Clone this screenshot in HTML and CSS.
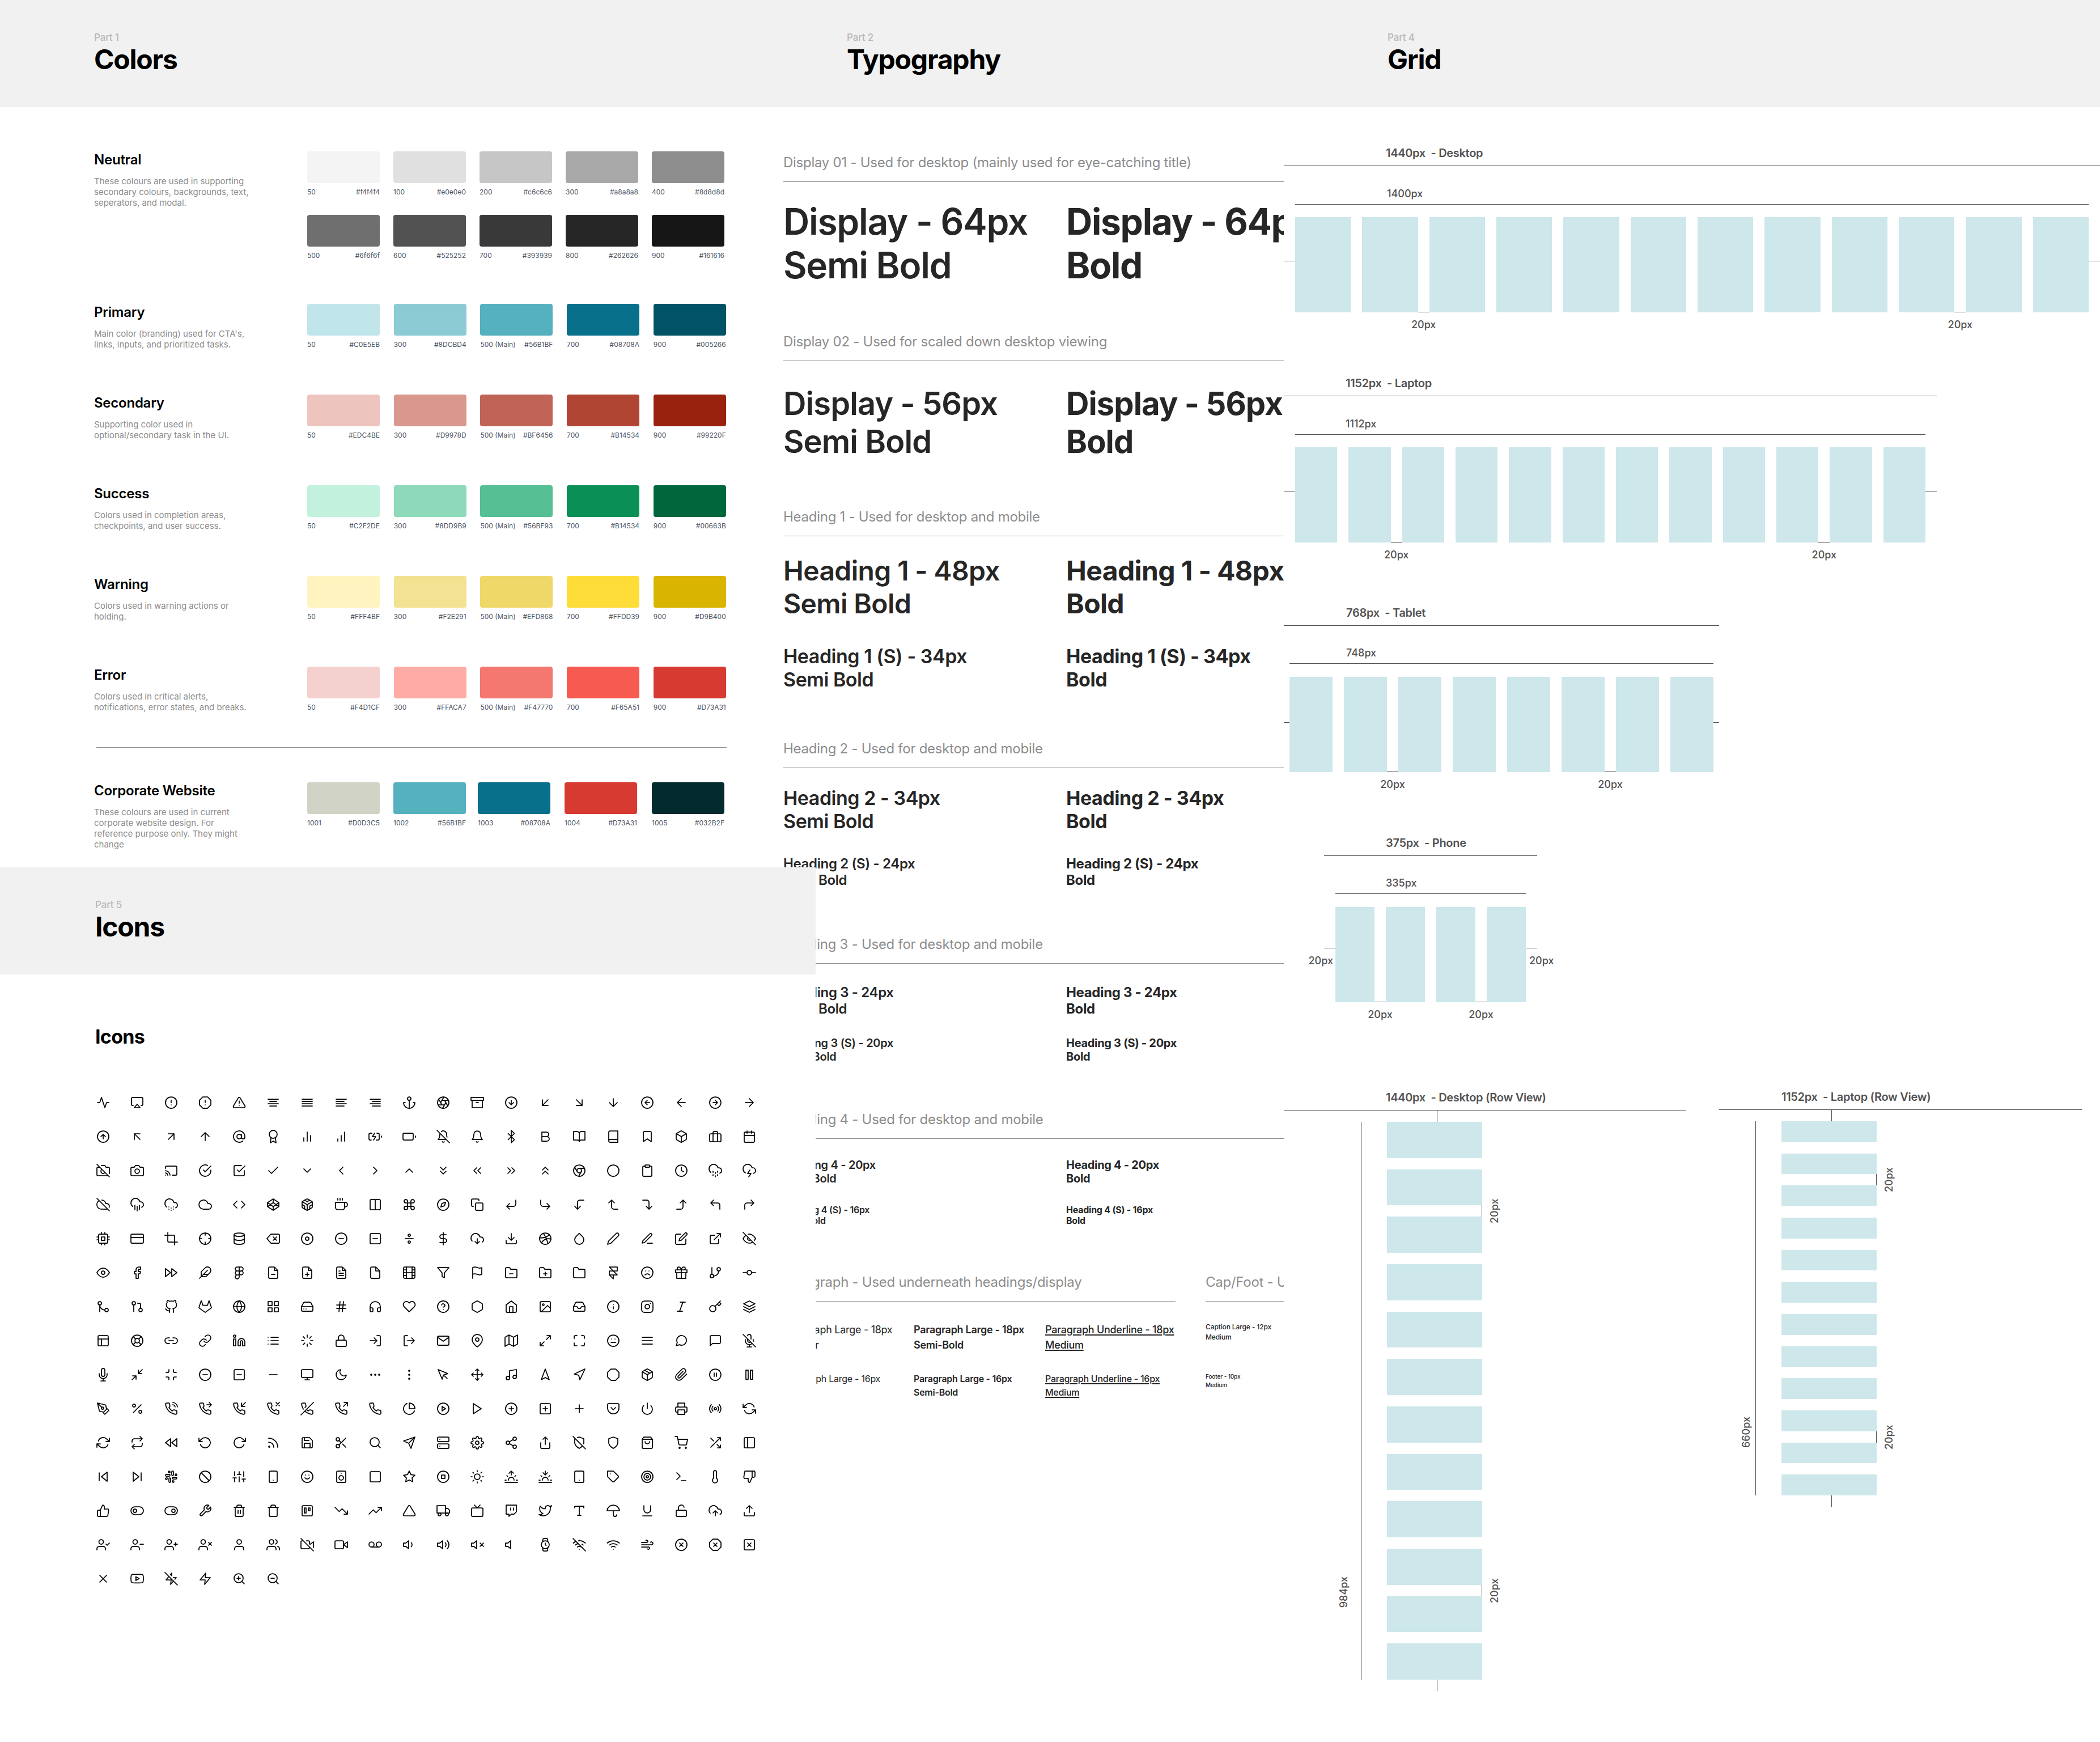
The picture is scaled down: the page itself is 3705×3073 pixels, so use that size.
FILE: index.html
```html
<!DOCTYPE html>
<html lang="en">
<head>
<meta charset="utf-8">
<title>Design system</title>
<link rel="stylesheet" href="styles.css">
</head>
<body>
<header class="band">
  <div class="head h1st"><div class="part">Part 1</div><h1>Colors</h1></div>
  <div class="head"><div class="part">Part 2</div><h1>Typography</h1></div>
  <div class="head"><div class="part">Part 4</div><h1>Grid</h1></div>
</header>
<main class="board">
<div class="left">
<section class="colors">
  <div class="crow neutral">
    <div><h3>Neutral</h3><p>These colours are used in supporting secondary colours, backgrounds, text, seperators, and modal.</p></div>
    <div class="swatches">
      <div class="sw"><div class="chip n1"></div><div class="lab"><span>50</span><span>#f4f4f4</span></div></div>
      <div class="sw"><div class="chip n2"></div><div class="lab"><span>100</span><span>#e0e0e0</span></div></div>
      <div class="sw"><div class="chip n3"></div><div class="lab"><span>200</span><span>#c6c6c6</span></div></div>
      <div class="sw"><div class="chip n4"></div><div class="lab"><span>300</span><span>#a8a8a8</span></div></div>
      <div class="sw"><div class="chip n5"></div><div class="lab"><span>400</span><span>#8d8d8d</span></div></div>
      <div class="sw"><div class="chip n6"></div><div class="lab"><span>500</span><span>#6f6f6f</span></div></div>
      <div class="sw"><div class="chip n7"></div><div class="lab"><span>600</span><span>#525252</span></div></div>
      <div class="sw"><div class="chip n8"></div><div class="lab"><span>700</span><span>#393939</span></div></div>
      <div class="sw"><div class="chip n9"></div><div class="lab"><span>800</span><span>#262626</span></div></div>
      <div class="sw"><div class="chip n10"></div><div class="lab"><span>900</span><span>#161616</span></div></div>
    </div>
  </div>
  <div class="crow">
    <div><h3>Primary</h3><p>Main color (branding) used for CTA's, links, inputs, and prioritized tasks.</p></div>
    <div class="swatches wide">
      <div class="sw"><div class="chip p1"></div><div class="lab"><span>50</span><span>#C0E5EB</span></div></div>
      <div class="sw"><div class="chip p2"></div><div class="lab"><span>300</span><span>#8DCBD4</span></div></div>
      <div class="sw"><div class="chip p3"></div><div class="lab"><span>500 (Main)</span><span>#56B1BF</span></div></div>
      <div class="sw"><div class="chip p4"></div><div class="lab"><span>700</span><span>#08708A</span></div></div>
      <div class="sw"><div class="chip p5"></div><div class="lab"><span>900</span><span>#005266</span></div></div>
    </div>
  </div>
  <div class="crow">
    <div><h3>Secondary</h3><p>Supporting color used in optional/secondary task in the UI.</p></div>
    <div class="swatches wide">
      <div class="sw"><div class="chip s1"></div><div class="lab"><span>50</span><span>#EDC4BE</span></div></div>
      <div class="sw"><div class="chip s2"></div><div class="lab"><span>300</span><span>#D9978D</span></div></div>
      <div class="sw"><div class="chip s3"></div><div class="lab"><span>500 (Main)</span><span>#BF6456</span></div></div>
      <div class="sw"><div class="chip s4"></div><div class="lab"><span>700</span><span>#B14534</span></div></div>
      <div class="sw"><div class="chip s5"></div><div class="lab"><span>900</span><span>#99220F</span></div></div>
    </div>
  </div>
  <div class="crow">
    <div><h3>Success</h3><p>Colors used in completion areas, checkpoints, and user success.</p></div>
    <div class="swatches wide">
      <div class="sw"><div class="chip g1"></div><div class="lab"><span>50</span><span>#C2F2DE</span></div></div>
      <div class="sw"><div class="chip g2"></div><div class="lab"><span>300</span><span>#8DD9B9</span></div></div>
      <div class="sw"><div class="chip g3"></div><div class="lab"><span>500 (Main)</span><span>#56BF93</span></div></div>
      <div class="sw"><div class="chip g4"></div><div class="lab"><span>700</span><span>#B14534</span></div></div>
      <div class="sw"><div class="chip g5"></div><div class="lab"><span>900</span><span>#00663B</span></div></div>
    </div>
  </div>
  <div class="crow">
    <div><h3>Warning</h3><p>Colors used in warning actions or holding.</p></div>
    <div class="swatches wide">
      <div class="sw"><div class="chip y1"></div><div class="lab"><span>50</span><span>#FFF4BF</span></div></div>
      <div class="sw"><div class="chip y2"></div><div class="lab"><span>300</span><span>#F2E291</span></div></div>
      <div class="sw"><div class="chip y3"></div><div class="lab"><span>500 (Main)</span><span>#EFD868</span></div></div>
      <div class="sw"><div class="chip y4"></div><div class="lab"><span>700</span><span>#FFDD39</span></div></div>
      <div class="sw"><div class="chip y5"></div><div class="lab"><span>900</span><span>#D9B400</span></div></div>
    </div>
  </div>
  <div class="crow last">
    <div><h3>Error</h3><p>Colors used in critical alerts, notifications, error states, and breaks.</p></div>
    <div class="swatches wide">
      <div class="sw"><div class="chip e1"></div><div class="lab"><span>50</span><span>#F4D1CF</span></div></div>
      <div class="sw"><div class="chip e2"></div><div class="lab"><span>300</span><span>#FFACA7</span></div></div>
      <div class="sw"><div class="chip e3"></div><div class="lab"><span>500 (Main)</span><span>#F47770</span></div></div>
      <div class="sw"><div class="chip e4"></div><div class="lab"><span>700</span><span>#F65A51</span></div></div>
      <div class="sw"><div class="chip e5"></div><div class="lab"><span>900</span><span>#D73A31</span></div></div>
    </div>
  </div>
  <hr class="rule">
  <div class="crow corp">
    <div><h3>Corporate Website</h3><p>These colours are used in current corporate website design. For reference purpose only. They might change</p></div>
    <div class="swatches">
      <div class="sw"><div class="chip k1"></div><div class="lab"><span>1001</span><span>#D0D3C5</span></div></div>
      <div class="sw"><div class="chip p3"></div><div class="lab"><span>1002</span><span>#56B1BF</span></div></div>
      <div class="sw"><div class="chip p4"></div><div class="lab"><span>1003</span><span>#08708A</span></div></div>
      <div class="sw"><div class="chip e5"></div><div class="lab"><span>1004</span><span>#D73A31</span></div></div>
      <div class="sw"><div class="chip k5"></div><div class="lab"><span>1005</span><span>#032B2F</span></div></div>
    </div>
  </div>
</section>
<section class="icons-part">
  <div class="band icons-band"><div class="head"><div class="part">Part 5</div><h1>Icons</h1></div></div>
  <div class="icons-body">
    <h2>Icons</h2>
    <svg class="defs"><defs>
      <circle id="c" cx="12" cy="12" r="10"/>
      <rect id="s" x="3" y="3" width="18" height="18" rx="2"/>
      <path id="b" d="M21 16V8a2 2 0 0 0-1-1.73l-7-4a2 2 0 0 0-2 0l-7 4A2 2 0 0 0 3 8v8a2 2 0 0 0 1 1.73l7 4a2 2 0 0 0 2 0l7-4A2 2 0 0 0 21 16z"/>
      <path id="p" d="M22 16.92v3a2 2 0 0 1-2.18 2 19.79 19.79 0 0 1-8.63-3.07 19.5 19.5 0 0 1-6-6 19.79 19.79 0 0 1-3.07-8.67A2 2 0 0 1 4.11 2h3a2 2 0 0 1 2 1.72 12.84 12.84 0 0 0 .7 2.81 2 2 0 0 1-.45 2.11L8.09 9.91a16 16 0 0 0 6 6l1.27-1.27a2 2 0 0 1 2.11-.45 12.84 12.84 0 0 0 2.81.7A2 2 0 0 1 22 16.92z"/>
      <path id="f" d="M14 2H6a2 2 0 0 0-2 2v16a2 2 0 0 0 2 2h12a2 2 0 0 0 2-2V8zM14 2v6h6"/>
      <path id="o" d="M7.86 2h8.28L22 7.86v8.28L16.14 22H7.86L2 16.14V7.86z"/>
      <path id="t" d="M10.29 3.86L1.82 18a2 2 0 0 0 1.71 3h16.94a2 2 0 0 0 1.71-3L13.71 3.86a2 2 0 0 0-3.42 0z"/>
      <path id="h" d="M5.45 5.11L2 12v6a2 2 0 0 0 2 2h16a2 2 0 0 0 2-2v-6l-3.45-6.89A2 2 0 0 0 16.76 4H7.24a2 2 0 0 0-1.79 1.11z"/>
      <path id="u" d="M16 21v-2a4 4 0 0 0-4-4H5a4 4 0 0 0-4 4v2M12.5 7a4 4 0 1 1-8 0 4 4 0 0 1 8 0z"/>
      <path id="v" d="M11 5L6 9H2v6h4l5 4z"/>
      <path id="sr" d="M17 18a5 5 0 0 0-10 0M4.22 10.22l1.42 1.42M1 18h2M21 18h2M18.36 11.64l1.42-1.42M23 22H1"/>
      <path id="fd" d="M22 19a2 2 0 0 1-2 2H4a2 2 0 0 1-2-2V5a2 2 0 0 1 2-2h5l2 3h9a2 2 0 0 1 2 2z"/>
    </defs></svg>
    <div class="icon-grid">
<svg><path d="M22 12h-4l-3 9L9 3l-3 9H2"/></svg>
<svg><path d="M5 17H4a2 2 0 0 1-2-2V5a2 2 0 0 1 2-2h16a2 2 0 0 1 2 2v10a2 2 0 0 1-2 2h-1M12 15l5 6H7z"/></svg>
<svg><use href="#c"/><path d="M12 8v4M12 16h.01"/></svg>
<svg><use href="#o"/><path d="M12 8v4M12 16h.01"/></svg>
<svg><use href="#t"/><path d="M12 9v4M12 17h.01"/></svg>
<svg><path d="M18 10H6M21 6H3M21 14H3M18 18H6"/></svg>
<svg><path d="M21 10H3M21 6H3M21 14H3M21 18H3"/></svg>
<svg><path d="M17 10H3M21 6H3M21 14H3M17 18H3"/></svg>
<svg><path d="M21 10H7M21 6H3M21 14H3M21 18H7"/></svg>
<svg><circle cx="12" cy="5" r="3"/><path d="M12 22V8M5 12H2a10 10 0 0 0 20 0h-3"/></svg>
<svg><use href="#c"/><path d="M14.31 8l5.74 9.94M9.69 8h11.48M7.38 12l5.74-9.94M9.69 16L3.95 6.06M14.31 16H2.83M16.62 12l-5.74 9.94"/></svg>
<svg><path d="M21 8v13H3V8M1 3h22v5H1zM10 12h4"/></svg>
<svg><use href="#c"/><path d="M8 12l4 4 4-4M12 8v8"/></svg>
<svg><path d="M17 7L7 17M17 17H7V7"/></svg>
<svg><path d="M7 7l10 10M17 7v10H7"/></svg>
<svg><path d="M12 5v14M19 12l-7 7-7-7"/></svg>
<svg><use href="#c"/><path d="M12 8l-4 4 4 4M16 12H8"/></svg>
<svg><path d="M19 12H5M12 19l-7-7 7-7"/></svg>
<svg><use href="#c"/><path d="M12 16l4-4-4-4M8 12h8"/></svg>
<svg><path d="M5 12h14M12 5l7 7-7 7"/></svg>

<svg><use href="#c"/><path d="M16 12l-4-4-4 4M12 16V8"/></svg>
<svg><path d="M17 17L7 7M7 17V7h10"/></svg>
<svg><path d="M7 17L17 7M7 7h10v10"/></svg>
<svg><path d="M12 19V5M5 12l7-7 7 7"/></svg>
<svg><circle cx="12" cy="12" r="4"/><path d="M16 8v5a3 3 0 0 0 6 0v-1a10 10 0 1 0-3.92 7.94"/></svg>
<svg><circle cx="12" cy="8" r="7"/><path d="M8.21 13.89L7 23l5-3 5 3-1.21-9.12"/></svg>
<svg><path d="M18 20V10M12 20V4M6 20v-6"/></svg>
<svg><path d="M12 20V10M18 20V4M6 20v-4"/></svg>
<svg><path d="M5 18H3a2 2 0 0 1-2-2V8a2 2 0 0 1 2-2h3.19M15 6h2a2 2 0 0 1 2 2v8a2 2 0 0 1-2 2h-3.19M23 13v-2M11 6l-4 6h6l-4 6"/></svg>
<svg><rect x="1" y="6" width="18" height="12" rx="2"/><path d="M23 13v-2"/></svg>
<svg><path d="M13.73 21a2 2 0 0 1-3.46 0M18.63 13A17.89 17.89 0 0 1 18 8M6.26 6.26A5.86 5.86 0 0 0 6 8c0 7-3 9-3 9h14M18 8a6 6 0 0 0-9.33-5M1 1l22 22"/></svg>
<svg><path d="M18 8A6 6 0 0 0 6 8c0 7-3 9-3 9h18s-3-2-3-9M13.73 21a2 2 0 0 1-3.46 0"/></svg>
<svg><path d="M6.5 6.5l11 11L12 23V1l5.500 5.500-11 11"/></svg>
<svg><path d="M6 4h8a4 4 0 0 1 4 4 4 4 0 0 1-4 4H6zM6 12h9a4 4 0 0 1 4 4 4 4 0 0 1-4 4H6z"/></svg>
<svg><path d="M2 3h6a4 4 0 0 1 4 4v14a3 3 0 0 0-3-3H2zM22 3h-6a4 4 0 0 0-4 4v14a3 3 0 0 1 3-3h7z"/></svg>
<svg><path d="M4 19.5A2.5 2.5 0 0 1 6.500 17H20M6.500 2H20v20H6.500A2.500 2.500 0 0 1 4 19.500v-15A2.500 2.500 0 0 1 6.500 2z"/></svg>
<svg><path d="M19 21l-7-5-7 5V5a2 2 0 0 1 2-2h10a2 2 0 0 1 2 2z"/></svg>
<svg><use href="#b"/><path d="M3.27 6.96L12 12.010l8.730-5.050M12 22.080V12"/></svg>
<svg><rect x="2" y="7" width="20" height="14" rx="2"/><path d="M16 21V5a2 2 0 0 0-2-2h-4a2 2 0 0 0-2 2v16"/></svg>
<svg><rect x="3" y="4" width="18" height="18" rx="2"/><path d="M16 2v4M8 2v4M3 10h18"/></svg>

<svg><path d="M1 1l22 22M21 21H3a2 2 0 0 1-2-2V8a2 2 0 0 1 2-2h3m3-3h6l2 3h4a2 2 0 0 1 2 2v9.340m-7.720-2.060a4 4 0 1 1-5.560-5.560"/></svg>
<svg><path d="M23 19a2 2 0 0 1-2 2H3a2 2 0 0 1-2-2V8a2 2 0 0 1 2-2h4l2-3h6l2 3h4a2 2 0 0 1 2 2z"/><circle cx="12" cy="13" r="4"/></svg>
<svg><path d="M2 16.100A5 5 0 0 1 5.900 20M2 12.050A9 9 0 0 1 9.950 20M2 8V6a2 2 0 0 1 2-2h16a2 2 0 0 1 2 2v12a2 2 0 0 1-2 2h-6M2 20h.01"/></svg>
<svg><path d="M22 11.080V12a10 10 0 1 1-5.930-9.140M22 4L12 14.010l-3-3"/></svg>
<svg><path d="M9 11l3 3L22 4M21 12v7a2 2 0 0 1-2 2H5a2 2 0 0 1-2-2V5a2 2 0 0 1 2-2h11"/></svg>
<svg><path d="M20 6L9 17l-5-5"/></svg>
<svg><path d="M6 9l6 6 6-6"/></svg>
<svg><path d="M15 18l-6-6 6-6"/></svg>
<svg><path d="M9 18l6-6-6-6"/></svg>
<svg><path d="M18 15l-6-6-6 6"/></svg>
<svg><path d="M7 13l5 5 5-5M7 6l5 5 5-5"/></svg>
<svg><path d="M11 17l-5-5 5-5M18 17l-5-5 5-5"/></svg>
<svg><path d="M13 17l5-5-5-5M6 17l5-5-5-5"/></svg>
<svg><path d="M17 11l-5-5-5 5M17 18l-5-5-5 5"/></svg>
<svg><use href="#c"/><circle cx="12" cy="12" r="4"/><path d="M21.170 8H12M3.950 6.060L8.540 14M10.880 21.940L15.460 14"/></svg>
<svg><use href="#c"/></svg>
<svg><path d="M16 4h2a2 2 0 0 1 2 2v14a2 2 0 0 1-2 2H6a2 2 0 0 1-2-2V6a2 2 0 0 1 2-2h2"/><rect x="8" y="2" width="8" height="4" rx="1"/></svg>
<svg><use href="#c"/><path d="M12 6v6l4 2"/></svg>
<svg><path d="M8 19v2M8 13v2M16 19v2M16 13v2M12 21v2M12 15v2M20 16.580A5 5 0 0 0 18 7h-1.260A8 8 0 1 0 4 15.250"/></svg>
<svg><path d="M19 16.900A5 5 0 0 0 18 7h-1.260a8 8 0 1 0-11.620 9M13 11l-4 6h6l-4 6"/></svg>

<svg><path d="M22.610 16.950A5 5 0 0 0 18 10h-1.260a8 8 0 0 0-7.050-6M5 5a8 8 0 0 0 4 15h9a5 5 0 0 0 1.700-.3M1 1l22 22"/></svg>
<svg><path d="M16 13v8M8 13v8M12 15v8M20 16.580A5 5 0 0 0 18 7h-1.260A8 8 0 1 0 4 15.250"/></svg>
<svg><path d="M20 17.580A5 5 0 0 0 18 8h-1.260A8 8 0 1 0 4 16.250M8 16h.01M8 20h.01M12 18h.01M12 22h.01M16 16h.01M16 20h.01"/></svg>
<svg><path d="M18 10h-1.260A8 8 0 1 0 9 20h9a5 5 0 0 0 0-10z"/></svg>
<svg><path d="M16 18l6-6-6-6M8 6l-6 6 6 6"/></svg>
<svg><path d="M12 2l10 6.500v7L12 22 2 15.500v-7zM12 22v-6.500M22 8.500l-10 7-10-7M2 15.500l10-7 10 7M12 2v6.500"/></svg>
<svg><use href="#b"/><path d="M7.500 4.210l4.500 2.600 4.500-2.600M7.500 19.790V14.600L3 12M21 12l-4.500 2.600v5.190M3.270 6.960L12 12.010l8.730-5.050M12 22.080V12"/></svg>
<svg><path d="M18 8h1a4 4 0 0 1 0 8h-1M2 8h16v9a4 4 0 0 1-4 4H6a4 4 0 0 1-4-4V8zM6 1v3M10 1v3M14 1v3"/></svg>
<svg><path d="M12 3h7a2 2 0 0 1 2 2v14a2 2 0 0 1-2 2h-7m0-18H5a2 2 0 0 0-2 2v14a2 2 0 0 0 2 2h7m0-18v18"/></svg>
<svg><path d="M18 3a3 3 0 0 0-3 3v12a3 3 0 0 0 3 3 3 3 0 0 0 3-3 3 3 0 0 0-3-3H6a3 3 0 0 0-3 3 3 3 0 0 0 3 3 3 3 0 0 0 3-3V6a3 3 0 0 0-3-3 3 3 0 0 0-3 3 3 3 0 0 0 3 3h12a3 3 0 0 0 3-3 3 3 0 0 0-3-3z"/></svg>
<svg><use href="#c"/><path d="M16.240 7.760l-2.120 6.360-6.360 2.120 2.120-6.360z"/></svg>
<svg><rect x="9" y="9" width="13" height="13" rx="2"/><path d="M5 15H4a2 2 0 0 1-2-2V4a2 2 0 0 1 2-2h9a2 2 0 0 1 2 2v1"/></svg>
<svg><path d="M9 10l-5 5 5 5M20 4v7a4 4 0 0 1-4 4H4"/></svg>
<svg><path d="M15 10l5 5-5 5M4 4v7a4 4 0 0 0 4 4h12"/></svg>
<svg><path d="M14 15l-5 5-5-5M20 4h-7a4 4 0 0 0-4 4v12"/></svg>
<svg><path d="M14 9L9 4 4 9M20 20h-7a4 4 0 0 1-4-4V4"/></svg>
<svg><path d="M10 15l5 5 5-5M4 4h7a4 4 0 0 1 4 4v12"/></svg>
<svg><path d="M10 9l5-5 5 5M4 20h7a4 4 0 0 0 4-4V4"/></svg>
<svg><path d="M9 14L4 9l5-5M20 20v-7a4 4 0 0 0-4-4H4"/></svg>
<svg><path d="M15 14l5-5-5-5M4 20v-7a4 4 0 0 1 4-4h12"/></svg>

<svg><rect x="4" y="4" width="16" height="16" rx="2"/><path d="M9 9h6v6H9zM9 1v3M15 1v3M9 20v3M15 20v3M20 9h3M20 14h3M1 9h3M1 14h3"/></svg>
<svg><rect x="1" y="4" width="22" height="16" rx="2"/><path d="M1 10h22"/></svg>
<svg><path d="M6.130 1L6 16a2 2 0 0 0 2 2h15M1 6.130L16 6a2 2 0 0 1 2 2v15"/></svg>
<svg><use href="#c"/><path d="M22 12h-4M6 12H2M12 6V2M12 22v-4"/></svg>
<svg><ellipse cx="12" cy="5" rx="9" ry="3"/><path d="M21 12c0 1.660-4 3-9 3s-9-1.340-9-3M3 5v14c0 1.660 4 3 9 3s9-1.340 9-3V5"/></svg>
<svg><path d="M21 4H8l-7 8 7 8h13a2 2 0 0 0 2-2V6a2 2 0 0 0-2-2zM18 9l-6 6M12 9l6 6"/></svg>
<svg><use href="#c"/><circle cx="12" cy="12" r="3"/></svg>
<svg><use href="#c"/><path d="M8 12h8"/></svg>
<svg><use href="#s"/><path d="M8 12h8"/></svg>
<svg><circle cx="12" cy="6" r="2"/><path d="M5 12h14"/><circle cx="12" cy="18" r="2"/></svg>
<svg><path d="M12 1v22M17 5H9.500a3.500 3.500 0 0 0 0 7h5a3.500 3.500 0 0 1 0 7H6"/></svg>
<svg><path d="M8 17l4 4 4-4M12 12v9M20.880 18.090A5 5 0 0 0 18 9h-1.260A8 8 0 1 0 3 16.290"/></svg>
<svg><path d="M21 15v4a2 2 0 0 1-2 2H5a2 2 0 0 1-2-2v-4M7 10l5 5 5-5M12 15V3"/></svg>
<svg><use href="#c"/><path d="M8.560 2.750c4.370 6.030 6.020 9.420 8.030 17.720m2.540-15.380c-3.720 4.350-8.940 5.660-16.880 5.850m19.500 1.900c-3.500-.93-6.630-.82-8.940 0-2.580.92-5.010 2.860-7.440 6.320"/></svg>
<svg><path d="M12 2.690l5.660 5.660a8 8 0 1 1-11.310 0z"/></svg>
<svg><path d="M17 3a2.828 2.828 0 1 1 4 4L7.500 20.500 2 22l1.500-5.500L17 3z"/></svg>
<svg><path d="M12 20h9M16.500 3.500a2.121 2.121 0 0 1 3 3L7 19l-4 1 1-4L16.500 3.500z"/></svg>
<svg><path d="M11 4H4a2 2 0 0 0-2 2v14a2 2 0 0 0 2 2h14a2 2 0 0 0 2-2v-7M18.500 2.500a2.121 2.121 0 0 1 3 3L12 15l-4 1 1-4 9.500-9.500z"/></svg>
<svg><path d="M18 13v6a2 2 0 0 1-2 2H5a2 2 0 0 1-2-2V8a2 2 0 0 1 2-2h6M15 3h6v6M10 14L21 3"/></svg>
<svg><path d="M17.940 17.940A10.070 10.070 0 0 1 12 20c-7 0-11-8-11-8a18.450 18.450 0 0 1 5.060-5.940M9.900 4.240A9.120 9.120 0 0 1 12 4c7 0 11 8 11 8a18.500 18.500 0 0 1-2.160 3.190m-6.720-1.070a3 3 0 1 1-4.240-4.240M1 1l22 22"/></svg>

<svg><path d="M1 12s4-8 11-8 11 8 11 8-4 8-11 8-11-8-11-8z"/><circle cx="12" cy="12" r="3"/></svg>
<svg><path d="M18 2h-3a5 5 0 0 0-5 5v3H7v4h3v8h4v-8h3l1-4h-4V7a1 1 0 0 1 1-1h3z"/></svg>
<svg><path d="M13 19l9-7-9-7zM2 19l9-7-9-7z"/></svg>
<svg><path d="M20.240 12.240a6 6 0 0 0-8.490-8.490L5 10.500V19h8.500zM16 8L2 22M17.500 15H9"/></svg>
<svg><path d="M5 5.500A3.500 3.500 0 0 1 8.500 2H12v7H8.500A3.500 3.500 0 0 1 5 5.500zM12 2h3.500a3.500 3.500 0 1 1 0 7H12V2zM12 12.500a3.500 3.500 0 1 1 7 0 3.500 3.500 0 1 1-7 0zM5 19.500A3.500 3.500 0 0 1 8.500 16H12v3.500a3.500 3.500 0 1 1-7 0zM5 12.500A3.500 3.500 0 0 1 8.500 9H12v7H8.500A3.500 3.500 0 0 1 5 12.500z"/></svg>
<svg><use href="#f"/><path d="M9 15h6"/></svg>
<svg><use href="#f"/><path d="M12 18v-6M9 15h6"/></svg>
<svg><use href="#f"/><path d="M16 13H8M16 17H8M10 9H8"/></svg>
<svg><path d="M13 2H6a2 2 0 0 0-2 2v16a2 2 0 0 0 2 2h12a2 2 0 0 0 2-2V9zM13 2v7h7"/></svg>
<svg><rect x="2" y="2" width="20" height="20" rx="2.180"/><path d="M7 2v20M17 2v20M2 12h20M2 7h5M2 17h5M17 17h5M17 7h5"/></svg>
<svg><path d="M22 3H2l8 9.460V19l4 2v-8.540z"/></svg>
<svg><path d="M4 15s1-1 4-1 5 2 8 2 4-1 4-1V3s-1 1-4 1-5-2-8-2-4 1-4 1zM4 22v-7"/></svg>
<svg><use href="#fd"/><path d="M9 14h6"/></svg>
<svg><use href="#fd"/><path d="M12 11v6M9 14h6"/></svg>
<svg><use href="#fd"/></svg>
<svg><path d="M5 16V9h14V2H5l14 14h-7m-7 0l7 7v-7m-7 0h7"/></svg>
<svg><use href="#c"/><path d="M16 16s-1.500-2-4-2-4 2-4 2M9 9h.01M15 9h.01"/></svg>
<svg><path d="M20 12v10H4V12M2 7h20v5H2zM12 22V7M12 7H7.500a2.500 2.500 0 0 1 0-5C11 2 12 7 12 7zM12 7h4.500a2.500 2.500 0 0 0 0-5C13 2 12 7 12 7z"/></svg>
<svg><path d="M6 3v12"/><circle cx="18" cy="6" r="3"/><circle cx="6" cy="18" r="3"/><path d="M18 9a9 9 0 0 1-9 9"/></svg>
<svg><circle cx="12" cy="12" r="4"/><path d="M1.050 12H7M17.010 12h5.950"/></svg>

<svg><circle cx="18" cy="18" r="3"/><circle cx="6" cy="6" r="3"/><path d="M6 21V9a9 9 0 0 0 9 9"/></svg>
<svg><circle cx="18" cy="18" r="3"/><circle cx="6" cy="6" r="3"/><path d="M13 6h3a2 2 0 0 1 2 2v7M6 9v12"/></svg>
<svg><path d="M9 19c-5 1.500-5-2.500-7-3m14 6v-3.870a3.370 3.370 0 0 0-.94-2.610c3.140-.35 6.440-1.540 6.440-7A5.440 5.440 0 0 0 20 4.770 5.070 5.070 0 0 0 19.910 1S18.730.65 16 2.480a13.380 13.380 0 0 0-7 0C6.270.65 5.090 1 5.090 1A5.070 5.070 0 0 0 5 4.770a5.440 5.440 0 0 0-1.500 3.780c0 5.420 3.300 6.610 6.440 7A3.370 3.370 0 0 0 9 18.130V22"/></svg>
<svg><path d="M22.650 14.390L12 22.130 1.350 14.390a.84.84 0 0 1-.3-.94l1.220-3.780 2.440-7.510A.42.42 0 0 1 4.820 2a.43.43 0 0 1 .58 0 .42.42 0 0 1 .11.18l2.440 7.490h8.100l2.440-7.510A.42.42 0 0 1 18.600 2a.43.43 0 0 1 .58 0 .42.42 0 0 1 .11.18l2.440 7.510L23 13.450a.84.84 0 0 1-.35.94z"/></svg>
<svg><use href="#c"/><path d="M2 12h20M12 2a15.300 15.300 0 0 1 4 10 15.300 15.300 0 0 1-4 10 15.300 15.300 0 0 1-4-10 15.300 15.300 0 0 1 4-10z"/></svg>
<svg><path d="M3 3h7v7H3zM14 3h7v7h-7zM14 14h7v7h-7zM3 14h7v7H3z"/></svg>
<svg><use href="#h"/><path d="M22 12H2M6 16h.01M10 16h.01"/></svg>
<svg><path d="M4 9h16M4 15h16M10 3L8 21M16 3l-2 18"/></svg>
<svg><path d="M3 18v-6a9 9 0 0 1 18 0v6M21 19a2 2 0 0 1-2 2h-1a2 2 0 0 1-2-2v-3a2 2 0 0 1 2-2h3zM3 19a2 2 0 0 0 2 2h1a2 2 0 0 0 2-2v-3a2 2 0 0 0-2-2H3z"/></svg>
<svg><path d="M20.840 4.610a5.500 5.500 0 0 0-7.780 0L12 5.670l-1.060-1.060a5.500 5.500 0 0 0-7.780 7.780l1.060 1.060L12 21.230l7.780-7.780 1.060-1.060a5.500 5.500 0 0 0 0-7.780z"/></svg>
<svg><use href="#c"/><path d="M9.090 9a3 3 0 0 1 5.830 1c0 2-3 3-3 3M12 17h.01"/></svg>
<svg><use href="#b"/></svg>
<svg><path d="M3 9l9-7 9 7v11a2 2 0 0 1-2 2H5a2 2 0 0 1-2-2zM9 22V12h6v10"/></svg>
<svg><use href="#s"/><circle cx="8.500" cy="8.500" r="1.500"/><path d="M21 15l-5-5L5 21"/></svg>
<svg><use href="#h"/><path d="M22 12h-6l-2 3h-4l-2-3H2"/></svg>
<svg><use href="#c"/><path d="M12 16v-4M12 8h.01"/></svg>
<svg><rect x="2" y="2" width="20" height="20" rx="5"/><path d="M16 11.370A4 4 0 1 1 12.630 8 4 4 0 0 1 16 11.370zM17.500 6.500h.01"/></svg>
<svg><path d="M19 4h-9M14 20H5M15 4L9 20"/></svg>
<svg><path d="M21 2l-2 2m-7.610 7.610a5.500 5.500 0 1 1-7.778 7.778 5.500 5.500 0 0 1 7.777-7.777zm0 0L15.500 7.500m0 0l3 3L22 7l-3-3m-3.500 3.500L19 4"/></svg>
<svg><path d="M12 2L2 7l10 5 10-5zM2 17l10 5 10-5M2 12l10 5 10-5"/></svg>

<svg><use href="#s"/><path d="M3 9h18M9 21V9"/></svg>
<svg><use href="#c"/><circle cx="12" cy="12" r="4"/><path d="M4.930 4.930l4.240 4.240M14.830 14.830l4.240 4.240M14.830 9.170l4.240-4.240M4.930 19.070l4.240-4.240"/></svg>
<svg><path d="M15 7h3a5 5 0 0 1 5 5 5 5 0 0 1-5 5h-3m-6 0H6a5 5 0 0 1-5-5 5 5 0 0 1 5-5h3M8 12h8"/></svg>
<svg><path d="M10 13a5 5 0 0 0 7.540.54l3-3a5 5 0 0 0-7.070-7.070l-1.720 1.710M14 11a5 5 0 0 0-7.540-.54l-3 3a5 5 0 0 0 7.070 7.070l1.710-1.710"/></svg>
<svg><path d="M16 8a6 6 0 0 1 6 6v7h-4v-7a2 2 0 0 0-2-2 2 2 0 0 0-2 2v7h-4v-7a6 6 0 0 1 6-6zM2 9h4v12H2z"/><circle cx="4" cy="4" r="2"/></svg>
<svg><path d="M8 6h13M8 12h13M8 18h13M3 6h.01M3 12h.01M3 18h.01"/></svg>
<svg><path d="M12 2v4M12 18v4M4.930 4.930l2.830 2.830M16.240 16.240l2.830 2.830M2 12h4M18 12h4M4.930 19.070l2.830-2.830M16.240 7.760l2.830-2.830"/></svg>
<svg><rect x="3" y="11" width="18" height="11" rx="2"/><path d="M7 11V7a5 5 0 0 1 10 0v4"/></svg>
<svg><path d="M15 3h4a2 2 0 0 1 2 2v14a2 2 0 0 1-2 2h-4M10 17l5-5-5-5M15 12H3"/></svg>
<svg><path d="M9 21H5a2 2 0 0 1-2-2V5a2 2 0 0 1 2-2h4M16 17l5-5-5-5M21 12H9"/></svg>
<svg><path d="M4 4h16c1.100 0 2 .9 2 2v12c0 1.100-.9 2-2 2H4c-1.100 0-2-.9-2-2V6c0-1.100.9-2 2-2zM22 6l-10 7L2 6"/></svg>
<svg><path d="M21 10c0 7-9 13-9 13s-9-6-9-13a9 9 0 0 1 18 0z"/><circle cx="12" cy="10" r="3"/></svg>
<svg><path d="M1 6v16l7-4 8 4 7-4V2l-7 4-8-4zM8 2v16M16 6v16"/></svg>
<svg><path d="M15 3h6v6M9 21H3v-6M21 3l-7 7M3 21l7-7"/></svg>
<svg><path d="M8 3H5a2 2 0 0 0-2 2v3m18 0V5a2 2 0 0 0-2-2h-3m0 18h3a2 2 0 0 0 2-2v-3M3 16v3a2 2 0 0 0 2 2h3"/></svg>
<svg><use href="#c"/><path d="M8 15h8M9 9h.01M15 9h.01"/></svg>
<svg><path d="M3 12h18M3 6h18M3 18h18"/></svg>
<svg><path d="M21 11.500a8.380 8.380 0 0 1-.9 3.800 8.500 8.500 0 0 1-7.600 4.700 8.380 8.380 0 0 1-3.800-.9L3 21l1.900-5.700a8.380 8.380 0 0 1-.9-3.800 8.500 8.500 0 0 1 4.700-7.600 8.380 8.380 0 0 1 3.800-.9h.5a8.480 8.480 0 0 1 8 8v.5z"/></svg>
<svg><path d="M21 15a2 2 0 0 1-2 2H7l-4 4V5a2 2 0 0 1 2-2h14a2 2 0 0 1 2 2z"/></svg>
<svg><path d="M1 1l22 22M9 9v3a3 3 0 0 0 5.120 2.120M15 9.340V4a3 3 0 0 0-5.940-.6M17 16.950A7 7 0 0 1 5 12v-2m14 0v2a7 7 0 0 1-.11 1.230M12 19v4M8 23h8"/></svg>

<svg><path d="M12 1a3 3 0 0 0-3 3v8a3 3 0 0 0 6 0V4a3 3 0 0 0-3-3zM19 10v2a7 7 0 0 1-14 0v-2M12 19v4M8 23h8"/></svg>
<svg><path d="M4 14h6v6M20 10h-6V4M14 10l7-7M3 21l7-7"/></svg>
<svg><path d="M8 3v3a2 2 0 0 1-2 2H3m18 0h-3a2 2 0 0 1-2-2V3m0 18v-3a2 2 0 0 1 2-2h3M3 16h3a2 2 0 0 1 2 2v3"/></svg>
<svg><use href="#c"/><path d="M8 12h8"/></svg>
<svg><use href="#s"/><path d="M8 12h8"/></svg>
<svg><path d="M5 12h14"/></svg>
<svg><rect x="2" y="3" width="20" height="14" rx="2"/><path d="M8 21h8M12 17v4"/></svg>
<svg><path d="M21 12.790A9 9 0 1 1 11.210 3 7 7 0 0 0 21 12.790z"/></svg>
<svg><circle cx="12" cy="12" r="1"/><circle cx="19" cy="12" r="1"/><circle cx="5" cy="12" r="1"/></svg>
<svg><circle cx="12" cy="12" r="1"/><circle cx="12" cy="5" r="1"/><circle cx="12" cy="19" r="1"/></svg>
<svg><path d="M3 3l7.070 16.970 2.510-7.390 7.390-2.510zM13 13l6 6"/></svg>
<svg><path d="M5 9l-3 3 3 3M9 5l3-3 3 3M15 19l-3 3-3-3M19 9l3 3-3 3M2 12h20M12 2v20"/></svg>
<svg><path d="M9 18V5l12-2v13"/><circle cx="6" cy="18" r="3"/><circle cx="18" cy="16" r="3"/></svg>
<svg><path d="M12 2l7 19-7-4-7 4z"/></svg>
<svg><path d="M3 11l19-9-9 19-2-8z"/></svg>
<svg><use href="#o"/></svg>
<svg><use href="#b"/><path d="M16.500 9.400l-9-5.190M3.270 6.960L12 12.010l8.730-5.050M12 22.080V12"/></svg>
<svg><path d="M21.440 11.050l-9.190 9.190a6 6 0 0 1-8.490-8.490l9.190-9.190a4 4 0 0 1 5.660 5.660l-9.200 9.190a2 2 0 0 1-2.830-2.830l8.490-8.480"/></svg>
<svg><use href="#c"/><path d="M10 15V9M14 15V9"/></svg>
<svg><path d="M6 4h4v16H6zM14 4h4v16h-4z"/></svg>

<svg><path d="M12 19l7-7 3 3-7 7zM18 13l-1.500-7.500L2 2l3.500 14.500L13 18zM2 2l7.586 7.586"/><circle cx="11" cy="11" r="2"/></svg>
<svg><path d="M19 5L5 19"/><circle cx="6.500" cy="6.500" r="2.500"/><circle cx="17.500" cy="17.500" r="2.500"/></svg>
<svg><use href="#p"/><path d="M15.050 5A5 5 0 0 1 19 8.950M15.050 1A9 9 0 0 1 23 8.940"/></svg>
<svg><use href="#p"/><path d="M19 1l4 4-4 4M15 5h8"/></svg>
<svg><use href="#p"/><path d="M16 2v6h6M23 1l-7 7"/></svg>
<svg><use href="#p"/><path d="M23 1l-6 6M17 1l6 6"/></svg>
<svg><path d="M10.680 13.310a16 16 0 0 0 3.410 2.600l1.270-1.270a2 2 0 0 1 2.110-.45 12.840 12.840 0 0 0 2.810.7 2 2 0 0 1 1.720 2v3a2 2 0 0 1-2.180 2 19.790 19.790 0 0 1-8.630-3.070 19.420 19.420 0 0 1-3.330-2.670m-2.670-3.340a19.790 19.790 0 0 1-3.070-8.630A2 2 0 0 1 4.110 2h3a2 2 0 0 1 2 1.720 12.840 12.840 0 0 0 .7 2.810 2 2 0 0 1-.45 2.110L8.090 9.910M23 1L1 23"/></svg>
<svg><use href="#p"/><path d="M23 7V1h-6M16 8l7-7"/></svg>
<svg><use href="#p"/></svg>
<svg><path d="M21.210 15.890A10 10 0 1 1 8 2.830M22 12A10 10 0 0 0 12 2v10z"/></svg>
<svg><use href="#c"/><path d="M10 8l6 4-6 4z"/></svg>
<svg><path d="M5 3l14 9-14 9z"/></svg>
<svg><use href="#c"/><path d="M12 8v8M8 12h8"/></svg>
<svg><use href="#s"/><path d="M12 8v8M8 12h8"/></svg>
<svg><path d="M12 5v14M5 12h14"/></svg>
<svg><path d="M4 3h16a2 2 0 0 1 2 2v6a10 10 0 0 1-10 10A10 10 0 0 1 2 11V5a2 2 0 0 1 2-2zM8 10l4 4 4-4"/></svg>
<svg><path d="M18.360 6.640a9 9 0 1 1-12.730 0M12 2v10"/></svg>
<svg><path d="M6 9V2h12v7M6 18H4a2 2 0 0 1-2-2v-5a2 2 0 0 1 2-2h16a2 2 0 0 1 2 2v5a2 2 0 0 1-2 2h-2M6 14h12v8H6z"/></svg>
<svg><circle cx="12" cy="12" r="2"/><path d="M16.240 7.760a6 6 0 0 1 0 8.490m-8.480-.01a6 6 0 0 1 0-8.490m11.310-2.820a10 10 0 0 1 0 14.140m-14.140 0a10 10 0 0 1 0-14.140"/></svg>
<svg><path d="M1 4v6h6M23 20v-6h-6M20.490 9A9 9 0 0 0 5.640 5.640L1 10m22 4l-4.640 4.360A9 9 0 0 1 3.510 15"/></svg>

<svg><path d="M23 4v6h-6M1 20v-6h6M3.510 9a9 9 0 0 1 14.850-3.360L23 10M1 14l4.640 4.360A9 9 0 0 0 20.490 15"/></svg>
<svg><path d="M17 1l4 4-4 4M3 11V9a4 4 0 0 1 4-4h14M7 23l-4-4 4-4M21 13v2a4 4 0 0 1-4 4H3"/></svg>
<svg><path d="M11 19l-9-7 9-7zM22 19l-9-7 9-7z"/></svg>
<svg><path d="M1 4v6h6M3.510 15a9 9 0 1 0 2.130-9.360L1 10"/></svg>
<svg><path d="M23 4v6h-6M20.490 15a9 9 0 1 1-2.120-9.360L23 10"/></svg>
<svg><path d="M4 11a9 9 0 0 1 9 9M4 4a16 16 0 0 1 16 16"/><circle cx="5" cy="19" r="1"/></svg>
<svg><path d="M19 21H5a2 2 0 0 1-2-2V5a2 2 0 0 1 2-2h11l5 5v11a2 2 0 0 1-2 2zM17 21v-8H7v8M7 3v5h8"/></svg>
<svg><circle cx="6" cy="6" r="3"/><circle cx="6" cy="18" r="3"/><path d="M20 4L8.120 15.880M14.470 14.480L20 20M8.120 8.120L12 12"/></svg>
<svg><circle cx="11" cy="11" r="8"/><path d="M21 21l-4.350-4.350"/></svg>
<svg><path d="M22 2L11 13M22 2l-7 20-4-9-9-4z"/></svg>
<svg><rect x="2" y="2" width="20" height="8" rx="2"/><rect x="2" y="14" width="20" height="8" rx="2"/><path d="M6 6h.01M6 18h.01"/></svg>
<svg><circle cx="12" cy="12" r="3"/><path d="M19.400 15a1.650 1.650 0 0 0 .33 1.820l.06.06a2 2 0 0 1 0 2.830 2 2 0 0 1-2.830 0l-.06-.06a1.650 1.650 0 0 0-1.820-.33 1.650 1.650 0 0 0-1 1.510V21a2 2 0 0 1-2 2 2 2 0 0 1-2-2v-.09A1.650 1.650 0 0 0 9 19.400a1.650 1.650 0 0 0-1.820.33l-.06.06a2 2 0 0 1-2.830 0 2 2 0 0 1 0-2.830l.06-.06a1.650 1.650 0 0 0 .33-1.820 1.650 1.650 0 0 0-1.510-1H3a2 2 0 0 1-2-2 2 2 0 0 1 2-2h.09A1.650 1.650 0 0 0 4.600 9a1.650 1.650 0 0 0-.33-1.820l-.06-.06a2 2 0 0 1 0-2.830 2 2 0 0 1 2.830 0l.06.06a1.650 1.650 0 0 0 1.820.33H9a1.650 1.650 0 0 0 1-1.510V3a2 2 0 0 1 2-2 2 2 0 0 1 2 2v.09a1.650 1.650 0 0 0 1 1.510 1.650 1.650 0 0 0 1.820-.33l.06-.06a2 2 0 0 1 2.830 0 2 2 0 0 1 0 2.830l-.06.06a1.650 1.650 0 0 0-.33 1.820V9a1.650 1.650 0 0 0 1.510 1H21a2 2 0 0 1 2 2 2 2 0 0 1-2 2h-.09a1.650 1.650 0 0 0-1.510 1z"/></svg>
<svg><circle cx="18" cy="5" r="3"/><circle cx="6" cy="12" r="3"/><circle cx="18" cy="19" r="3"/><path d="M8.590 13.510l6.830 3.980M15.410 6.510l-6.820 3.980"/></svg>
<svg><path d="M4 12v8a2 2 0 0 0 2 2h12a2 2 0 0 0 2-2v-8M16 6l-4-4-4 4M12 2v13"/></svg>
<svg><path d="M19.690 14a6.900 6.900 0 0 0 .31-2V5l-8-3-3.160 1.180M4.730 4.730L4 5v7c0 6 8 10 8 10a20.290 20.290 0 0 0 5.620-4.380M1 1l22 22"/></svg>
<svg><path d="M12 22s8-4 8-10V5l-8-3-8 3v7c0 6 8 10 8 10z"/></svg>
<svg><path d="M6 2L3 6v14a2 2 0 0 0 2 2h14a2 2 0 0 0 2-2V6l-3-4zM3 6h18M16 10a4 4 0 0 1-8 0"/></svg>
<svg><circle cx="9" cy="21" r="1"/><circle cx="20" cy="21" r="1"/><path d="M1 1h4l2.680 13.390a2 2 0 0 0 2 1.610h9.720a2 2 0 0 0 2-1.610L23 6H6"/></svg>
<svg><path d="M16 3h5v5M4 20L21 3M21 16v5h-5M15 15l6 6M4 4l5 5"/></svg>
<svg><use href="#s"/><path d="M9 3v18"/></svg>

<svg><path d="M19 20L9 12l10-8zM5 19V5"/></svg>
<svg><path d="M5 4l10 8-10 8zM19 5v14"/></svg>
<svg><path d="M14.500 10c-.83 0-1.500-.67-1.500-1.500v-5c0-.83.67-1.500 1.500-1.500s1.500.67 1.500 1.500v5c0 .83-.67 1.500-1.500 1.500zM20.500 10H19V8.500c0-.83.67-1.500 1.500-1.500s1.500.67 1.500 1.500-.67 1.500-1.500 1.500zM9.500 14c.83 0 1.500.67 1.500 1.500v5c0 .83-.67 1.500-1.500 1.500S8 21.330 8 20.500v-5c0-.83.67-1.500 1.500-1.500zM3.500 14H5v1.500c0 .83-.67 1.500-1.500 1.500S2 16.330 2 15.500 2.670 14 3.500 14zM14 14.500c0-.83.67-1.500 1.500-1.500h5c.83 0 1.500.67 1.500 1.500s-.67 1.500-1.500 1.500h-5c-.83 0-1.500-.67-1.500-1.500zM15.500 19H14v1.500c0 .83.67 1.500 1.500 1.500s1.500-.67 1.500-1.500-.67-1.500-1.500-1.500zM10 9.500C10 8.670 9.330 8 8.500 8h-5C2.670 8 2 8.670 2 9.500S2.670 11 3.500 11h5c.83 0 1.500-.67 1.500-1.500zM8.500 5H10V3.500C10 2.670 9.330 2 8.500 2S7 2.670 7 3.500 7.670 5 8.500 5z"/></svg>
<svg><use href="#c"/><path d="M4.930 4.930l14.140 14.140"/></svg>
<svg><path d="M4 21v-7M4 10V3M12 21v-9M12 8V3M20 21v-5M20 12V3M1 14h6M9 8h6M17 16h6"/></svg>
<svg><rect x="5" y="2" width="14" height="20" rx="2"/><path d="M12 18h.01"/></svg>
<svg><use href="#c"/><path d="M8 14s1.500 2 4 2 4-2 4-2M9 9h.01M15 9h.01"/></svg>
<svg><rect x="4" y="2" width="16" height="20" rx="2"/><circle cx="12" cy="14" r="4"/><path d="M12 6h.01"/></svg>
<svg><use href="#s"/></svg>
<svg><path d="M12 2l3.090 6.260L22 9.270l-5 4.870 1.180 6.880L12 17.770l-6.180 3.250L7 14.140 2 9.270l6.910-1.010z"/></svg>
<svg><use href="#c"/><path d="M9 9h6v6H9z"/></svg>
<svg><circle cx="12" cy="12" r="5"/><path d="M12 1v2M12 21v2M4.220 4.220l1.420 1.420M18.360 18.360l1.420 1.420M1 12h2M21 12h2M4.220 19.780l1.420-1.420M18.360 5.640l1.420-1.420"/></svg>
<svg><use href="#sr"/><path d="M12 2v7M8 6l4-4 4 4"/></svg>
<svg><use href="#sr"/><path d="M12 9V2M16 5l-4 4-4-4"/></svg>
<svg><rect x="4" y="2" width="16" height="20" rx="2"/><path d="M12 18h.01"/></svg>
<svg><path d="M20.590 13.410l-7.170 7.170a2 2 0 0 1-2.830 0L2 12V2h10l8.590 8.590a2 2 0 0 1 0 2.820zM7 7h.01"/></svg>
<svg><use href="#c"/><circle cx="12" cy="12" r="6"/><circle cx="12" cy="12" r="2"/></svg>
<svg><path d="M4 17l6-6-6-6M12 19h8"/></svg>
<svg><path d="M14 14.760V3.500a2.500 2.500 0 0 0-5 0v11.260a4.500 4.500 0 1 0 5 0z"/></svg>
<svg><path d="M10 15v4a3 3 0 0 0 3 3l4-9V2H5.720a2 2 0 0 0-2 1.700l-1.380 9a2 2 0 0 0 2 2.300zm7-13h2.670A2.310 2.310 0 0 1 22 4v7a2.310 2.310 0 0 1-2.330 2H17"/></svg>

<svg><path d="M14 9V5a3 3 0 0 0-3-3l-4 9v11h11.280a2 2 0 0 0 2-1.700l1.380-9a2 2 0 0 0-2-2.300zM7 22H4a2 2 0 0 1-2-2v-7a2 2 0 0 1 2-2h3"/></svg>
<svg><rect x="1" y="5" width="22" height="14" rx="7"/><circle cx="8" cy="12" r="3"/></svg>
<svg><rect x="1" y="5" width="22" height="14" rx="7"/><circle cx="16" cy="12" r="3"/></svg>
<svg><path d="M14.700 6.300a1 1 0 0 0 0 1.400l1.600 1.600a1 1 0 0 0 1.400 0l3.770-3.770a6 6 0 0 1-7.940 7.940l-6.910 6.910a2.120 2.120 0 0 1-3-3l6.910-6.910a6 6 0 0 1 7.940-7.940l-3.760 3.760z"/></svg>
<svg><path d="M3 6h18M19 6v14a2 2 0 0 1-2 2H7a2 2 0 0 1-2-2V6m3 0V4a2 2 0 0 1 2-2h4a2 2 0 0 1 2 2v2M10 11v6M14 11v6"/></svg>
<svg><path d="M3 6h18M19 6v14a2 2 0 0 1-2 2H7a2 2 0 0 1-2-2V6m3 0V4a2 2 0 0 1 2-2h4a2 2 0 0 1 2 2v2"/></svg>
<svg><use href="#s"/><path d="M7 7h3v9H7zM14 7h3v5h-3z"/></svg>
<svg><path d="M23 18l-9.500-9.500-5 5L1 6M17 18h6v-6"/></svg>
<svg><path d="M23 6l-9.500 9.500-5-5L1 18M17 6h6v6"/></svg>
<svg><use href="#t"/></svg>
<svg><path d="M1 3h15v13H1zM16 8h4l3 3v5h-7z"/><circle cx="5.500" cy="18.500" r="2.500"/><circle cx="18.500" cy="18.500" r="2.500"/></svg>
<svg><rect x="2" y="7" width="20" height="15" rx="2"/><path d="M17 2l-5 5-5-5"/></svg>
<svg><path d="M21 2H3v16h5v4l4-4h5l4-4V2zm-10 9V7m5 4V7"/></svg>
<svg><path d="M23 3a10.900 10.900 0 0 1-3.140 1.530 4.480 4.480 0 0 0-7.860 3v1A10.660 10.660 0 0 1 3 4s-4 9 5 13a11.640 11.640 0 0 1-7 2c9 5 20 0 20-11.500a4.500 4.500 0 0 0-.08-.83A7.720 7.720 0 0 0 23 3z"/></svg>
<svg><path d="M4 7V4h16v3M9 20h6M12 4v16"/></svg>
<svg><path d="M23 12a11.050 11.050 0 0 0-22 0zm-5 7a3 3 0 0 1-6 0v-7"/></svg>
<svg><path d="M6 3v7a6 6 0 0 0 6 6 6 6 0 0 0 6-6V3M4 21h16"/></svg>
<svg><rect x="3" y="11" width="18" height="11" rx="2"/><path d="M7 11V7a5 5 0 0 1 9.900-1"/></svg>
<svg><path d="M16 16l-4-4-4 4M12 12v9M20.390 18.390A5 5 0 0 0 18 9h-1.260A8 8 0 1 0 3 16.300"/></svg>
<svg><path d="M21 15v4a2 2 0 0 1-2 2H5a2 2 0 0 1-2-2v-4M17 8l-5-5-5 5M12 3v12"/></svg>

<svg><use href="#u"/><path d="M17 11l2 2 4-4"/></svg>
<svg><use href="#u"/><path d="M23 11h-6"/></svg>
<svg><use href="#u"/><path d="M20 8v6M23 11h-6"/></svg>
<svg><use href="#u"/><path d="M18 8l5 5M23 8l-5 5"/></svg>
<svg><path d="M20 21v-2a4 4 0 0 0-4-4H8a4 4 0 0 0-4 4v2"/><circle cx="12" cy="7" r="4"/></svg>
<svg><path d="M17 21v-2a4 4 0 0 0-4-4H5a4 4 0 0 0-4 4v2M23 21v-2a4 4 0 0 0-3-3.870M16 3.130a4 4 0 0 1 0 7.750"/><circle cx="9" cy="7" r="4"/></svg>
<svg><path d="M16 16v1a2 2 0 0 1-2 2H3a2 2 0 0 1-2-2V7a2 2 0 0 1 2-2h2m5.660 0H14a2 2 0 0 1 2 2v3.340l1 1L23 7v10M1 1l22 22"/></svg>
<svg><path d="M23 7l-7 5 7 5z"/><rect x="1" y="5" width="15" height="14" rx="2"/></svg>
<svg><circle cx="5.500" cy="11.500" r="4.500"/><circle cx="18.500" cy="11.500" r="4.500"/><path d="M5.500 16h13"/></svg>
<svg><use href="#v"/><path d="M15.540 8.460a5 5 0 0 1 0 7.070"/></svg>
<svg><use href="#v"/><path d="M19.070 4.930a10 10 0 0 1 0 14.140M15.540 8.460a5 5 0 0 1 0 7.070"/></svg>
<svg><use href="#v"/><path d="M23 9l-6 6M17 9l6 6"/></svg>
<svg><use href="#v"/></svg>
<svg><circle cx="12" cy="12" r="7"/><path d="M12 9v3l1.500 1.500M16.510 17.350l-.35 3.830a2 2 0 0 1-2 1.820H9.830a2 2 0 0 1-2-1.820l-.35-3.830m.01-10.700l.35-3.830A2 2 0 0 1 9.830 1h4.350a2 2 0 0 1 2 1.820l.35 3.830"/></svg>
<svg><path d="M1 1l22 22M16.720 11.060A10.940 10.940 0 0 1 19 12.550M5 12.550a10.940 10.940 0 0 1 5.170-2.390M10.710 5.050A16 16 0 0 1 22.580 9M1.420 9a15.910 15.910 0 0 1 4.700-2.880M8.530 16.110a6 6 0 0 1 6.950 0M12 20h.01"/></svg>
<svg><path d="M5 12.550a11 11 0 0 1 14.080 0M1.420 9a16 16 0 0 1 21.160 0M8.530 16.110a6 6 0 0 1 6.950 0M12 20h.01"/></svg>
<svg><path d="M9.590 4.590A2 2 0 1 1 11 8H2m10.590 11.410A2 2 0 1 0 14 16H2m15.730-8.270A2.500 2.500 0 1 1 19.500 12H2"/></svg>
<svg><use href="#c"/><path d="M15 9l-6 6M9 9l6 6"/></svg>
<svg><use href="#o"/><path d="M15 9l-6 6M9 9l6 6"/></svg>
<svg><use href="#s"/><path d="M9 9l6 6M15 9l-6 6"/></svg>

<svg><path d="M18 6L6 18M6 6l12 12"/></svg>
<svg><path d="M22.540 6.420a2.780 2.780 0 0 0-1.940-2C18.880 4 12 4 12 4s-6.880 0-8.600.46a2.780 2.780 0 0 0-1.940 2A29 29 0 0 0 1 11.750a29 29 0 0 0 .46 5.330A2.780 2.780 0 0 0 3.400 19c1.720.46 8.600.46 8.600.46s6.880 0 8.600-.46a2.780 2.780 0 0 0 1.940-2 29 29 0 0 0 .46-5.250 29 29 0 0 0-.46-5.330zM9.750 15.020l5.750-3.270-5.750-3.270z"/></svg>
<svg><path d="M12.410 6.750L13 2l-2.430 2.920M18.570 12.910L21 10h-5.340M8 8l-5 6h9l-1 8 5-6M1 1l22 22"/></svg>
<svg><path d="M13 2L3 14h9l-1 8 10-12h-9z"/></svg>
<svg><circle cx="11" cy="11" r="8"/><path d="M21 21l-4.350-4.350M11 8v6M8 11h6"/></svg>
<svg><circle cx="11" cy="11" r="8"/><path d="M21 21l-4.350-4.350M8 11h6"/></svg>
    </div>
  </div>
</section>
</div>

<div class="type">
  <div class="group g-d1">
    <div class="tlabel">Display 01 - Used for desktop (mainly used for eye-catching title)</div>
    <div class="trow m-d1 d64"><div class="sb">Display - 64px<br>Semi Bold</div><div class="bd">Display - 64px<br>Bold</div></div>
  </div>
  <div class="group g-d2">
    <div class="tlabel">Display 02 - Used for scaled down desktop viewing</div>
    <div class="trow m-d2 d56"><div class="sb">Display - 56px<br>Semi Bold</div><div class="bd">Display - 56px<br>Bold</div></div>
  </div>
  <div class="group g-h1">
    <div class="tlabel">Heading 1 - Used for desktop and mobile</div>
    <div class="trow m-h1 h48"><div class="sb">Heading 1 - 48px<br>Semi Bold</div><div class="bd">Heading 1 - 48px<br>Bold</div></div>
    <div class="trow m-h1s h34"><div class="sb">Heading 1 (S) - 34px<br>Semi Bold</div><div class="bd">Heading 1 (S) - 34px<br>Bold</div></div>
  </div>
  <div class="group g-h2">
    <div class="tlabel">Heading 2 - Used for desktop and mobile</div>
    <div class="trow m-h2 h34"><div class="sb">Heading 2 - 34px<br>Semi Bold</div><div class="bd">Heading 2 - 34px<br>Bold</div></div>
    <div class="trow m-h2s h24"><div class="sb">Heading 2 (S) - 24px<br>Semi Bold</div><div class="bd">Heading 2 (S) - 24px<br>Bold</div></div>
  </div>
  <div class="group g-h3">
    <div class="tlabel">Heading 3 - Used for desktop and mobile</div>
    <div class="trow m-h3 h24"><div class="sb">Heading 3 - 24px<br>Semi Bold</div><div class="bd">Heading 3 - 24px<br>Bold</div></div>
    <div class="trow m-h3s h20"><div class="sb">Heading 3 (S) - 20px<br>Semi Bold</div><div class="bd">Heading 3 (S) - 20px<br>Bold</div></div>
  </div>
  <div class="group g-h4">
    <div class="tlabel">Heading 4 - Used for desktop and mobile</div>
    <div class="trow m-h4 h20"><div class="sb">Heading 4 - 20px<br>Semi Bold</div><div class="bd">Heading 4 - 20px<br>Bold</div></div>
    <div class="trow m-h4s h16"><div class="sb">Heading 4 (S) - 16px<br>Semi Bold</div><div class="bd">Heading 4 (S) - 16px<br>Bold</div></div>
  </div>
  <div class="para-wrap">
    <div class="para">
      <div class="tlabel">Paragraph - Used underneath headings/display</div>
      <div class="prow p18"><div>Paragraph Large - 18px<br>Regular</div><div class="sb">Paragraph Large - 18px<br>Semi-Bold</div><div class="ul"><u>Paragraph Underline - 18px</u><br><u>Medium</u></div></div>
      <div class="prow p16"><div>Paragraph Large - 16px<br>Regular</div><div class="sb">Paragraph Large - 16px<br>Semi-Bold</div><div class="ul"><u>Paragraph Underline - 16px</u><br><u>Medium</u></div></div>
    </div>
    <div class="cap">
      <div class="tlabel">Cap/Foot - Used for captions</div>
      <div class="cap12">Caption Large - 12px<br>Medium</div>
      <div class="cap10">Footer - 10px<br>Medium</div>
    </div>
  </div>
</div>

<div class="grids">
  <div class="frame f-desktop">
    <div class="outer">1440px&nbsp; - Desktop</div>
    <div class="inner">
      <div class="inlabel">1400px</div>
      <div class="cols">
        <div class="col"></div><div class="col mark"><span>20px</span></div><div class="col"></div><div class="col"></div><div class="col"></div><div class="col"></div><div class="col"></div><div class="col"></div><div class="col"></div><div class="col mark"><span>20px</span></div><div class="col"></div><div class="col"></div>
      </div>
    </div>
  </div>
  <div class="frame f-laptop">
    <div class="outer">1152px&nbsp; - Laptop</div>
    <div class="inner">
      <div class="inlabel">1112px</div>
      <div class="cols">
        <div class="col"></div><div class="col mark"><span>20px</span></div><div class="col"></div><div class="col"></div><div class="col"></div><div class="col"></div><div class="col"></div><div class="col"></div><div class="col"></div><div class="col mark"><span>20px</span></div><div class="col"></div><div class="col"></div>
      </div>
    </div>
  </div>
  <div class="frame f-tablet">
    <div class="outer">768px&nbsp; - Tablet</div>
    <div class="inner">
      <div class="inlabel">748px</div>
      <div class="cols">
        <div class="col"></div><div class="col mark"><span>20px</span></div><div class="col"></div><div class="col"></div><div class="col"></div><div class="col mark"><span>20px</span></div><div class="col"></div><div class="col"></div>
      </div>
    </div>
  </div>
  <div class="frame f-phone">
    <div class="outer">375px&nbsp; - Phone</div>
    <div class="inner">
      <div class="inlabel">335px</div>
      <div class="cols">
        <b class="side sl">20px</b>
        <div class="col mark"><span>20px</span></div><div class="col"></div><div class="col mark"><span>20px</span></div><div class="col"></div>
        <b class="side sr">20px</b>
      </div>
    </div>
  </div>
  <div class="rowviews">
    <div class="rv rv-d">
      <div class="outer">1440px&nbsp; - Desktop (Row View)</div>
      <div class="rows">
        <div class="vline"><span>984px</span></div>
        <div class="r"></div><div class="r rmark"><span>20px</span></div><div class="r"></div><div class="r"></div><div class="r"></div><div class="r"></div><div class="r"></div><div class="r"></div><div class="r"></div><div class="r rmark"><span>20px</span></div><div class="r"></div><div class="r"></div>
      </div>
    </div>
    <div class="rv rv-l">
      <div class="outer">1152px&nbsp; - Laptop (Row View)</div>
      <div class="rows">
        <div class="vline"><span>660px</span></div>
        <div class="r"></div><div class="r rmark"><span>20px</span></div><div class="r"></div><div class="r"></div><div class="r"></div><div class="r"></div><div class="r"></div><div class="r"></div><div class="r"></div><div class="r rmark"><span>20px</span></div><div class="r"></div><div class="r"></div>
      </div>
    </div>
  </div>
</div>
</main>
</body>
</html>
```

FILE: styles.css
```css
* { box-sizing: border-box; }
html, body { margin: 0; padding: 0; background: #fff; }
body { width: 3705px; height: 3073px; overflow: hidden; font-family: Inter, "Noto Sans", sans-serif; color: #262626; }
h1, h2, h3, p { margin: 0; }

.band { display: grid; grid-template-columns: 1494px 954px 1fr; height: 189px; background: #f1f1f1; }
.head { padding-top: 56px; }
.h1st { padding-left: 166px; }
.part { font-size: 17px; line-height: 20px; font-weight: 500; color: #b8b8b8; letter-spacing: -0.01em; }
h1 { font-size: 48px; line-height: 58px; font-weight: 700; color: #000; letter-spacing: -0.025em; }

.board { display: flex; align-items: flex-start; height: 2884px; }
.left { flex: none; width: 1382px; }

.colors { height: 1341px; padding: 78px 0 0 166px; }
.crow { display: grid; grid-template-columns: 376px 1fr; height: 160px; }
.crow.neutral { height: 269px; }
.crow.last { height: 142px; }
.crow h3 { font-size: 24px; line-height: 29px; font-weight: 600; color: #000; letter-spacing: -0.01em; }
.crow p { margin-top: 14px; width: 275px; font-size: 15px; line-height: 19px; color: #8d8d8d; }
.swatches { display: flex; flex-wrap: wrap; gap: 32px 24px; align-content: flex-start; }
.swatches.wide { column-gap: 24.7px; flex-wrap: nowrap; }
.sw { flex: none; width: 128px; }
.chip { height: 56px; border-radius: 4px; }
.lab { display: flex; justify-content: space-between; margin-top: 8px; font-size: 12px; line-height: 16px; color: #4d5564; white-space: nowrap; }
.rule { margin: 0 0 61px 4px; width: 1112px; height: 1px; border: 0; background: #8d8d8d; }
.corp .sw:nth-child(3) { margin-left: -3px; }
.corp .sw:nth-child(4) { margin-left: 1px; }
.corp .sw:nth-child(5) { margin-left: 2px; }

.n1 { background: #f4f4f4; } .n2 { background: #e0e0e0; } .n3 { background: #c6c6c6; } .n4 { background: #a8a8a8; } .n5 { background: #8d8d8d; }
.n6 { background: #6f6f6f; } .n7 { background: #525252; } .n8 { background: #393939; } .n9 { background: #262626; } .n10 { background: #161616; }
.p1 { background: #c0e5eb; } .p2 { background: #8dcbd4; } .p3 { background: #56b1bf; } .p4 { background: #08708a; } .p5 { background: #005266; }
.s1 { background: #edc4be; } .s2 { background: #d9978d; } .s3 { background: #bf6456; } .s4 { background: #b14534; } .s5 { background: #99220f; }
.g1 { background: #c2f2de; } .g2 { background: #8dd9b9; } .g3 { background: #56bf93; } .g4 { background: #0a8f56; } .g5 { background: #00663b; }
.y1 { background: #fff4bf; } .y2 { background: #f2e291; } .y3 { background: #efd868; } .y4 { background: #ffdd39; } .y5 { background: #d9b400; }
.e1 { background: #f4d1cf; } .e2 { background: #ffaca7; } .e3 { background: #f47770; } .e4 { background: #f65a51; } .e5 { background: #d73a31; }
.k1 { background: #d0d3c5; } .k5 { background: #032b2f; }

.icons-part { position: relative; z-index: 2; width: 1439px; height: 1543px; background: #fff; }
.icons-band { display: block; padding-left: 168px; }
.icons-body { padding: 91px 0 0 168px; }
h2 { font-size: 34px; line-height: 38px; font-weight: 700; color: #000; letter-spacing: -0.02em; }
.defs { position: absolute; width: 0; height: 0; }
.icon-grid { display: grid; grid-template-columns: repeat(20, 24px); gap: 36px; margin: 85px 0 0 2px; }
.icon-grid svg { display: block; width: 24px; height: 24px; overflow: visible; fill: none; stroke: #000; stroke-width: 1.75; stroke-linecap: round; stroke-linejoin: round; }

.type { flex: none; width: 883px; height: 100%; overflow: hidden; padding-top: 83px; }
.group { white-space: nowrap; }
.tlabel { padding-bottom: 19px; font-size: 24px; line-height: 29px; color: #8d8d8d; border-bottom: 1px solid #8d8d8d; white-space: nowrap; overflow: hidden; letter-spacing: -0.011em; }
.g-d1 { height: 316px; } .g-d2 { height: 309px; } .g-h1 { height: 409px; } .g-h2 { height: 345px; } .g-h3 { height: 309px; } .g-h4 { height: 287px; }
.trow { display: grid; grid-template-columns: 499px 1fr; color: #262626; letter-spacing: -0.014em; }
.sb { font-weight: 600; }
.bd { font-weight: 700; }
.d64 { font-size: 64px; line-height: 77px; letter-spacing: -0.02em; }
.d56 { font-size: 56px; line-height: 67px; letter-spacing: -0.016em; }
.h48 { font-size: 48px; line-height: 58px; letter-spacing: -0.013em; }
.h34 { font-size: 34px; line-height: 41px; letter-spacing: -0.014em; }
.h24 { font-size: 24px; line-height: 29px; letter-spacing: -0.015em; }
.h20 { font-size: 20px; line-height: 24px; letter-spacing: -0.015em; }
.h16 { font-size: 16px; line-height: 19px; letter-spacing: -0.015em; }
.m-d1 { margin-top: 31px; } .m-d2 { margin-top: 42px; }
.m-h1 { margin-top: 32px; } .m-h1s { margin-top: 43px; }
.m-h2 { margin-top: 32px; } .m-h2s { margin-top: 40px; }
.m-h3 { margin-top: 36px; } .m-h3s { margin-top: 34px; }
.m-h4 { margin-top: 34px; } .m-h4s { margin-top: 34px; }

.para-wrap { display: flex; gap: 53px; }
.para { flex: none; width: 692px; }
.cap { flex: none; width: 138px; }
.prow { display: grid; grid-template-columns: 230px 232px 1fr; white-space: nowrap; }
.p18 { margin-top: 36px; font-size: 18px; line-height: 27px; letter-spacing: -0.016em; }
.p16 { margin-top: 34px; font-size: 16px; line-height: 24px; letter-spacing: -0.016em; }
.ul { font-weight: 500; }
.ul u { text-decoration-thickness: 1.5px; text-underline-offset: 2px; }
.cap12 { margin-top: 36px; font-size: 12px; line-height: 18px; font-weight: 500; white-space: nowrap; letter-spacing: -0.01em; }
.cap10 { margin-top: 53px; font-size: 10px; line-height: 15px; font-weight: 500; white-space: nowrap; letter-spacing: -0.01em; }

.grids { flex: 1; min-width: 0; height: 100%; overflow: hidden; padding-top: 69px; color: #525252; }
.frame { position: relative; }
.outer { padding-bottom: 10px; font-size: 20px; line-height: 24px; font-weight: 600; border-bottom: 1px solid #525252; white-space: nowrap; letter-spacing: -0.015em; }
.inlabel { font-size: 18px; line-height: 22px; font-weight: 500; padding-bottom: 7px; border-bottom: 1px solid #525252; }
.inner { margin-top: 38px; }
.cols { position: relative; display: flex; gap: 20px; margin-top: 22px; height: 168px; }
.col { position: relative; flex: 1; background: #cde7eb; }
.mark::after { content: ""; position: absolute; left: 100%; bottom: 0; width: 20px; height: 1px; background: #525252; }
.mark span { position: absolute; left: calc(100% + 10px); top: calc(100% + 11px); transform: translateX(-50%); font-size: 18px; line-height: 22px; font-weight: 500; }
.cols::before, .cols::after { content: ""; position: absolute; top: var(--tick); width: 20px; height: 1px; background: #525252; }
.cols::before { right: 100%; }
.cols::after { left: 100%; }

.f-desktop { --tick: 77px; width: 1440px; }
.f-desktop .outer { padding-left: 180px; }
.f-desktop .inner { margin-left: 20px; margin-right: 20px; }
.f-desktop .inlabel { padding-left: 162px; }

.f-laptop { --tick: 77px; width: 1152px; margin-top: 113px; }
.f-laptop .outer { padding-left: 109px; }
.f-laptop .inner { margin-left: 20px; margin-right: 20px; }
.f-laptop .inlabel { padding-left: 89px; }

.f-tablet { --tick: 80px; width: 768px; margin-top: 112px; }
.f-tablet .outer { padding-left: 110px; }
.f-tablet .inner { margin-left: 10px; margin-right: 10px; margin-top: 37px; }
.f-tablet .inlabel { padding-left: 100px; }
.f-tablet .cols { margin-top: 23px; }
.f-tablet .cols::before, .f-tablet .cols::after { width: 10px; }

.f-phone { --tick: 72px; width: 376px; margin: 113px 0 0 71px; }
.f-phone .outer { padding-left: 109px; }
.f-phone .inner { margin-left: 20px; margin-right: 20px; margin-top: 37px; }
.f-phone .inlabel { padding-left: 89px; }
.f-phone .cols { margin-top: 23px; }
.side { position: absolute; top: 84px; font-size: 18px; line-height: 22px; font-weight: 500; }
.sl { right: calc(100% + 4px); }
.sr { left: calc(100% + 6px); }

.rowviews { display: flex; gap: 58px; margin-top: 156px; }
.rv { flex: none; }
.rv-d { width: 710px; }
.rv-l { width: 640px; margin-top: -1px; }
.rv-d .outer { padding-left: 180px; }
.rv-l .outer { padding-left: 110px; }
.rows { position: relative; display: flex; flex-direction: column; gap: 20px; width: 168px; margin-top: 20px; }
.rv-d .rows { margin-left: 182px; height: 984px; }
.rv-l .rows { margin-left: 110px; height: 660px; }
.r { position: relative; flex: 1; background: #cde7eb; }
.rows::before, .rows::after { content: ""; position: absolute; left: 88px; width: 1px; height: 20px; background: #525252; }
.rows::before { bottom: 100%; }
.rows::after { top: 100%; }
.vline { position: absolute; left: -46px; top: 0; bottom: 0; width: 1px; background: #525252; }
.vline span, .rmark span { position: absolute; writing-mode: vertical-rl; transform: rotate(180deg); font-size: 18px; line-height: 22px; font-weight: 500; white-space: nowrap; }
.rv-d .vline span { right: 20px; bottom: 127px; }
.rv-l .vline span { right: 6px; bottom: 84px; }
.rmark::after { content: ""; position: absolute; right: 0; top: 100%; width: 1px; height: 20px; background: #525252; }
.rmark span { left: calc(100% + 11px); height: 44px; }
.rv-d .rmark span { top: calc(100% - 12px); }
.rv-l .rmark span { top: calc(100% - 12px); }
```
